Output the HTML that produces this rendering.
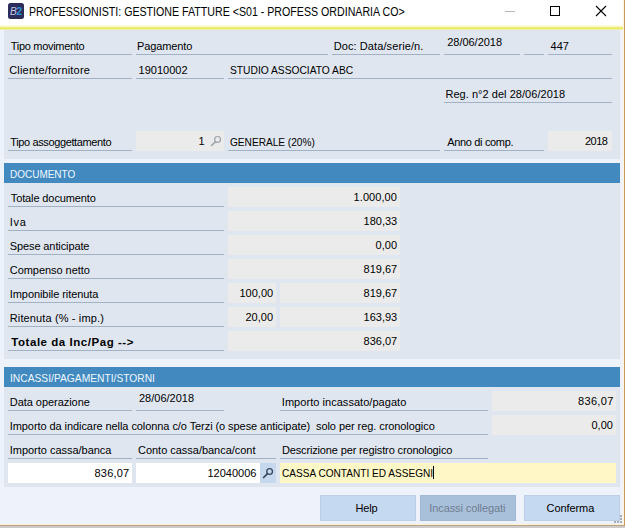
<!DOCTYPE html>
<html><head><meta charset="utf-8"><style>
html,body{margin:0;padding:0}
body{width:625px;height:528px;overflow:hidden;position:relative;background:#eef2fa;font-family:"Liberation Sans",sans-serif}
div{position:absolute}
.t{line-height:13px;white-space:pre;color:#000}
svg{position:absolute;left:0;top:0}
</style></head><body>
<div style="left:0px;top:0px;width:625px;height:26px;background:#ffffff;"></div><div style="left:0px;top:25px;width:625px;height:1px;background:#fdfde8;"></div><div style="left:0px;top:26px;width:625px;height:1px;background:#f8f8b8;"></div><div style="left:0px;top:27px;width:625px;height:1px;background:#efef80;"></div><div style="left:0px;top:28px;width:625px;height:1px;background:#e9e965;"></div><div style="left:0px;top:29px;width:625px;height:1px;background:#f0f0a8;"></div><div style="left:4px;top:30px;width:616px;height:129px;background:#dfe6f0;"></div><div style="left:4px;top:163px;width:616px;height:20px;background:#4289c0;"></div><div style="left:4px;top:183px;width:616px;height:176px;background:#dfe6f0;"></div><div style="left:4px;top:367px;width:616px;height:20px;background:#4289c0;"></div><div style="left:4px;top:387px;width:616px;height:100px;background:#dfe6f0;"></div><div style="left:8px;top:54px;width:124px;height:1px;background:#a1b1c6;"></div><div style="left:8px;top:78px;width:124px;height:1px;background:#a1b1c6;"></div><div style="left:8px;top:150px;width:124px;height:1px;background:#a1b1c6;"></div><div style="left:136px;top:54px;width:192px;height:1px;background:#a1b1c6;"></div><div style="left:332px;top:54px;width:108px;height:1px;background:#a1b1c6;"></div><div style="left:444px;top:54px;width:76px;height:1px;background:#a1b1c6;"></div><div style="left:524px;top:54px;width:20px;height:1px;background:#a1b1c6;"></div><div style="left:548px;top:54px;width:64px;height:1px;background:#a1b1c6;"></div><div style="left:136px;top:78px;width:88px;height:1px;background:#a1b1c6;"></div><div style="left:228px;top:78px;width:384px;height:1px;background:#a1b1c6;"></div><div style="left:444px;top:102px;width:168px;height:1px;background:#a1b1c6;"></div><div style="left:136px;top:131px;width:88px;height:20px;background:#ebebeb;"></div><div style="left:228px;top:150px;width:212px;height:1px;background:#a1b1c6;"></div><div style="left:444px;top:150px;width:100px;height:1px;background:#a1b1c6;"></div><div style="left:548px;top:131px;width:64px;height:20px;background:#ebebeb;"></div><div style="left:8px;top:206px;width:216px;height:1px;background:#a1b1c6;"></div><div style="left:228px;top:187px;width:172px;height:20px;background:#ebebeb;"></div><div style="left:8px;top:230px;width:216px;height:1px;background:#a1b1c6;"></div><div style="left:228px;top:211px;width:172px;height:20px;background:#ebebeb;"></div><div style="left:8px;top:254px;width:216px;height:1px;background:#a1b1c6;"></div><div style="left:228px;top:235px;width:172px;height:20px;background:#ebebeb;"></div><div style="left:8px;top:278px;width:216px;height:1px;background:#a1b1c6;"></div><div style="left:228px;top:259px;width:172px;height:20px;background:#ebebeb;"></div><div style="left:8px;top:302px;width:216px;height:1px;background:#a1b1c6;"></div><div style="left:228px;top:283px;width:48px;height:20px;background:#ebebeb;"></div><div style="left:280px;top:283px;width:120px;height:20px;background:#ebebeb;"></div><div style="left:8px;top:326px;width:216px;height:1px;background:#a1b1c6;"></div><div style="left:228px;top:307px;width:48px;height:20px;background:#ebebeb;"></div><div style="left:280px;top:307px;width:120px;height:20px;background:#ebebeb;"></div><div style="left:8px;top:350px;width:216px;height:1px;background:#a1b1c6;"></div><div style="left:228px;top:331px;width:172px;height:20px;background:#ebebeb;"></div><div style="left:8px;top:410px;width:124px;height:1px;background:#a1b1c6;"></div><div style="left:136px;top:410px;width:88px;height:1px;background:#a1b1c6;"></div><div style="left:280px;top:410px;width:208px;height:1px;background:#a1b1c6;"></div><div style="left:492px;top:391px;width:124px;height:20px;background:#ebebeb;"></div><div style="left:8px;top:434px;width:480px;height:1px;background:#a1b1c6;"></div><div style="left:492px;top:415px;width:124px;height:20px;background:#ebebeb;"></div><div style="left:8px;top:458px;width:124px;height:1px;background:#a1b1c6;"></div><div style="left:136px;top:458px;width:140px;height:1px;background:#a1b1c6;"></div><div style="left:280px;top:458px;width:208px;height:1px;background:#a1b1c6;"></div><div style="left:8px;top:463px;width:124px;height:20px;background:#ffffff;"></div><div style="left:136px;top:463px;width:124px;height:20px;background:#ffffff;"></div><div style="left:260px;top:463px;width:16px;height:20px;background:#c5d8ee;"></div><div style="left:280px;top:463px;width:336px;height:20px;background:#fff8c6;"></div><div style="left:433px;top:466px;width:1px;height:13px;background:#000;"></div><div style="left:320px;top:495px;width:96px;height:26px;background:#c5d9f0;box-shadow:inset 0 0 0 1px #bccfe6"></div><div style="left:420px;top:495px;width:96px;height:26px;background:#a9c0da;box-shadow:inset 0 0 0 1px #a3b9d3"></div><div style="left:524px;top:495px;width:96px;height:26px;background:#c5d9f0;box-shadow:inset 0 0 0 1px #bccfe6"></div><div style="left:623px;top:0px;width:1px;height:524px;background:#fdf3de;"></div><div style="left:624px;top:0px;width:1px;height:526px;background:#c99a5e;"></div><div style="left:0px;top:524px;width:624px;height:1px;background:#fdf0d8;"></div><div style="left:0px;top:525px;width:624px;height:1px;background:#c2a27e;"></div><div style="left:0px;top:526px;width:625px;height:2px;background:#cbcbcb;"></div>
<svg width="625" height="528" viewBox="0 0 625 528"><rect x="8" y="3" width="16" height="16" rx="2.5" fill="#2c2d5a"/><text x="10.1" y="14.5" font-family="Liberation Sans" font-style="italic" font-size="10.2" fill="#c6c8e6">B</text><text x="16.2" y="14.6" font-family="Liberation Sans" font-weight="bold" font-size="10.6" fill="#2f92d6">2</text><line x1="505" y1="11.5" x2="515" y2="11.5" stroke="#b8b8b8" stroke-width="1"/><rect x="550.5" y="6.5" width="9" height="9" fill="none" stroke="#000" stroke-width="1"/><path d="M596 6 L606 16 M606 6 L596 16" stroke="#000" stroke-width="1.1"/><circle cx="217.6" cy="139.4" r="2.9" fill="none" stroke="#9da1aa" stroke-width="1.15"/><line x1="215.5" y1="141.6" x2="211.6" y2="145.5" stroke="#9da1aa" stroke-width="1.5" stroke-linecap="round"/><circle cx="269.6" cy="471.5" r="2.85" fill="none" stroke="#38475e" stroke-width="1.3"/><line x1="267.5" y1="473.7" x2="263.6" y2="477.5" stroke="#38475e" stroke-width="1.7" stroke-linecap="round"/><rect x="620" y="515" width="2" height="2" fill="#a9adb3"/><rect x="620" y="518" width="2" height="2" fill="#a9adb3"/><rect x="620" y="521" width="2" height="2" fill="#a9adb3"/><rect x="617" y="521" width="2" height="2" fill="#a9adb3"/><rect x="614" y="521" width="2" height="2" fill="#a9adb3"/></svg>
<div class="t" style="left:29.11px;top:6px;font-size:12px;font-weight:normal;transform:scaleX(0.8863);transform-origin:0 0;color:#000">PROFESSIONISTI: GESTIONE FATTURE &lt;S01 - PROFESS ORDINARIA CO&gt;</div><div class="t" style="left:10.8px;top:40px;font-size:11px;font-weight:normal;letter-spacing:-0.308px;color:#000">Tipo movimento</div><div class="t" style="left:137.0px;top:40px;font-size:11px;font-weight:normal;letter-spacing:-0.125px;color:#000">Pagamento</div><div class="t" style="left:333.7px;top:40px;font-size:11px;font-weight:normal;letter-spacing:0.094px;color:#000">Doc: Data/serie/n.</div><div class="t" style="left:447.2px;top:36px;font-size:11px;font-weight:normal;letter-spacing:-0.022px;color:#000">28/06/2018</div><div class="t" style="left:550.6px;top:40px;font-size:11px;font-weight:normal;letter-spacing:0.0px;color:#000">447</div><div class="t" style="left:9.2px;top:64px;font-size:11px;font-weight:normal;letter-spacing:0.188px;color:#000">Cliente/fornitore</div><div class="t" style="left:138.6px;top:64px;font-size:11px;font-weight:normal;letter-spacing:0.0px;color:#000">19010002</div><div class="t" style="left:229.67px;top:64px;font-size:11px;font-weight:normal;transform:scaleX(0.9313);transform-origin:0 0;color:#000">STUDIO ASSOCIATO ABC</div><div class="t" style="left:445.4px;top:88px;font-size:11px;font-weight:normal;letter-spacing:0.045px;color:#000">Reg. n°2 del 28/06/2018</div><div class="t" style="left:10.2px;top:136px;font-size:11px;font-weight:normal;letter-spacing:-0.368px;color:#000">Tipo assoggettamento</div><div class="t" style="left:198.5px;top:135px;font-size:11px;font-weight:normal;letter-spacing:0.0px;color:#000">1</div><div class="t" style="left:230.4px;top:136px;font-size:11px;font-weight:normal;transform:scaleX(0.9185);transform-origin:0 0;color:#000">GENERALE (20%)</div><div class="t" style="left:447.2px;top:136px;font-size:11px;font-weight:normal;letter-spacing:-0.333px;color:#000">Anno di comp.</div><div class="t" style="left:584.9px;top:135px;font-size:11px;font-weight:normal;letter-spacing:-0.5px;color:#000">2018</div><div class="t" style="left:9.84px;top:168px;font-size:11px;font-weight:normal;transform:scaleX(0.9071);transform-origin:0 0;color:#eef8ff">DOCUMENTO</div><div class="t" style="left:10.75px;top:192px;font-size:11px;font-weight:normal;letter-spacing:-0.113px;color:#000">Totale documento</div><div class="t" style="left:353.6px;top:191px;font-size:11px;font-weight:normal;letter-spacing:0.057px;color:#000">1.000,00</div><div class="t" style="left:9.75px;top:216px;font-size:11px;font-weight:normal;letter-spacing:0.7px;color:#000">Iva</div><div class="t" style="left:363.6px;top:215px;font-size:11px;font-weight:normal;letter-spacing:0.0px;color:#000">180,33</div><div class="t" style="left:9.75px;top:240px;font-size:11px;font-weight:normal;letter-spacing:-0.107px;color:#000">Spese anticipate</div><div class="t" style="left:375.6px;top:239px;font-size:11px;font-weight:normal;letter-spacing:0.0px;color:#000">0,00</div><div class="t" style="left:9.75px;top:264px;font-size:11px;font-weight:normal;letter-spacing:-0.046px;color:#000">Compenso netto</div><div class="t" style="left:363.6px;top:263px;font-size:11px;font-weight:normal;letter-spacing:0.0px;color:#000">819,67</div><div class="t" style="left:9.75px;top:288px;font-size:11px;font-weight:normal;letter-spacing:-0.067px;color:#000">Imponibile ritenuta</div><div class="t" style="left:363.6px;top:287px;font-size:11px;font-weight:normal;letter-spacing:0.0px;color:#000">819,67</div><div class="t" style="left:9.75px;top:312px;font-size:11px;font-weight:normal;letter-spacing:0.133px;color:#000">Ritenuta (% - imp.)</div><div class="t" style="left:363.6px;top:311px;font-size:11px;font-weight:normal;letter-spacing:0.0px;color:#000">163,93</div><div class="t" style="left:11.3px;top:336px;font-size:11.5px;font-weight:bold;letter-spacing:0.54px;color:#000">Totale da Inc/Pag --&gt;</div><div class="t" style="left:363.6px;top:335px;font-size:11px;font-weight:normal;letter-spacing:0.0px;color:#000">836,07</div><div class="t" style="left:239.5px;top:287px;font-size:11px;font-weight:normal;letter-spacing:0.0px;color:#000">100,00</div><div class="t" style="left:245.5px;top:311px;font-size:11px;font-weight:normal;letter-spacing:0.0px;color:#000">20,00</div><div class="t" style="left:9.97px;top:372px;font-size:11px;font-weight:normal;transform:scaleX(0.9325);transform-origin:0 0;color:#eef8ff">INCASSI/PAGAMENTI/STORNI</div><div class="t" style="left:9.75px;top:396px;font-size:11px;font-weight:normal;letter-spacing:-0.043px;color:#000">Data operazione</div><div class="t" style="left:139.0px;top:392px;font-size:11px;font-weight:normal;letter-spacing:0.0px;color:#000">28/06/2018</div><div class="t" style="left:281.8px;top:396px;font-size:11px;font-weight:normal;letter-spacing:0.043px;color:#000">Importo incassato/pagato</div><div class="t" style="left:578.0px;top:395px;font-size:11px;font-weight:normal;letter-spacing:0.32px;color:#000">836,07</div><div class="t" style="left:9.75px;top:420px;font-size:11px;font-weight:normal;letter-spacing:-0.072px;color:#000">Importo da indicare nella colonna c/o Terzi (o spese anticipate)  solo per reg. cronologico</div><div class="t" style="left:591.5px;top:419px;font-size:11px;font-weight:normal;letter-spacing:0.0px;color:#000">0,00</div><div class="t" style="left:9.75px;top:444px;font-size:11px;font-weight:normal;letter-spacing:-0.022px;color:#000">Importo cassa/banca</div><div class="t" style="left:138.0px;top:444px;font-size:11px;font-weight:normal;letter-spacing:-0.024px;color:#000">Conto cassa/banca/cont</div><div class="t" style="left:281.9px;top:444px;font-size:11px;font-weight:normal;letter-spacing:-0.143px;color:#000">Descrizione per registro cronologico</div><div class="t" style="left:94.5px;top:467px;font-size:11px;font-weight:normal;letter-spacing:0.2px;color:#000">836,07</div><div class="t" style="left:207.5px;top:467px;font-size:11px;font-weight:normal;letter-spacing:0.0px;color:#000">12040006</div><div class="t" style="left:281.78px;top:467px;font-size:11px;font-weight:normal;transform:scaleX(0.9166);transform-origin:0 0;color:#000">CASSA CONTANTI ED ASSEGNI</div><div class="t" style="left:355.4px;top:502px;font-size:11px;font-weight:normal;letter-spacing:-0.1px;color:#000">Help</div><div class="t" style="left:429.3px;top:502px;font-size:11px;font-weight:normal;letter-spacing:-0.094px;color:#6f7e92">Incassi collegati</div><div class="t" style="left:546.6px;top:502px;font-size:11px;font-weight:normal;letter-spacing:-0.086px;color:#000">Conferma</div>
</body></html>
